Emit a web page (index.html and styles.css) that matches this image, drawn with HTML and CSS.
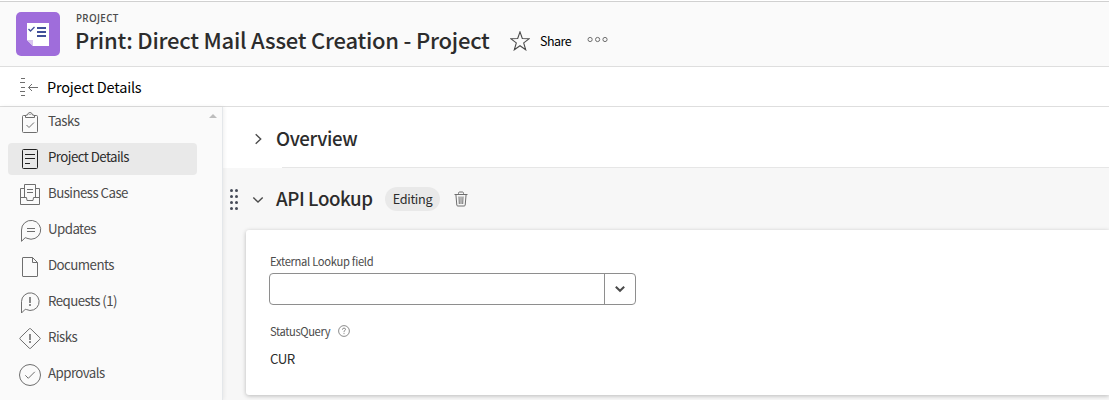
FILE: index.html
```html
<!DOCTYPE html>
<html lang="en">
<head>
<meta charset="utf-8">
<title>Project Details</title>
<link rel="stylesheet" href="styles.css">
</head>
<body>
<div class="app">
  <header class="header">
    <svg class="logo" width="44" height="44" viewBox="0 0 44 44"><rect width="44" height="44" rx="5" fill="#9f6ddb"/><path d="M11 11h22v23H17l-6-6z" fill="#fff"/><path d="M11 28h6v6z" fill="#d9c5ef"/><path d="M21 16h9M21 20h9M21 24h9" stroke="#404f9a" stroke-width="2"/><path d="M12.500 17l2 2 4-4" fill="none" stroke="#404f9a" stroke-width="1.300"/></svg>
    <div class="heading">
      <div class="kind">PROJECT</div>
      <h1 class="title">Print: Direct Mail Asset Creation - Project</h1>
    </div>
    <div class="actions">
      <svg class="star" width="20" height="20" viewBox="0 0 20 20"><path d="M10 .9l2.300 6.600 7 .2-5.600 4.200 2 6.900L10 14.700l-5.700 4.100 2-6.900L.7 7.700l7-.2z"/></svg>
      <span class="share">Share</span>
      <svg class="more" width="21" height="7" viewBox="0 0 21 7"><circle cx="3.100" cy="3.500" r="2.100"/><circle cx="10.600" cy="3.500" r="2.100"/><circle cx="18" cy="3.500" r="2.100"/></svg>
    </div>
  </header>
  <div class="subheader">
    <svg class="collapse" width="20" height="20" viewBox="0 0 20 20"><path d="M2 1.500h4M1 5.500h5M2 10.500h4M1 14.500h5M2 18.500h4M9.500 10.500H19M13 7L9.500 10.500l3.500 3.500"/></svg>
    <span class="crumb">Project Details</span>
  </div>
  <div class="body">
    <nav class="sidebar">
      <a class="item"><svg width="24" height="24" viewBox="0 0 24 24"><path d="M8 4.500H5.500a1 1 0 0 0-1 1v15a1 1 0 0 0 1 1h13a1 1 0 0 0 1-1v-15a1 1 0 0 0-1-1H16M7.500 6.500V5q0-1 1.500-1h.5q.4-2.500 2.500-2.500T14.500 4h.5q1.500 0 1.500 1v1.500zM8.500 14l2.500 2.500 5-5M11.500 3.500h1"/></svg><span class="lb">Tasks</span></a>
      <a class="item active"><svg width="24" height="24" viewBox="0 0 24 24"><rect x="4.500" y="2.500" width="15" height="19" rx="1"/><path d="M7 7.500h10M7 11.500h10M7 16.500h5"/></svg><span class="lb">Project Details</span></a>
      <a class="item"><svg width="24" height="24" viewBox="0 0 24 24"><path d="M6.500 14.500v-13h11v13M6.500 5.500h-4v16h19v-16h-4M2.500 14.500h6l.5 3h6l.5-3h6M9 6.500h6M9 9.500h6"/></svg><span class="lb">Business Case</span></a>
      <a class="item"><svg width="24" height="24" viewBox="0 0 24 24"><path d="M3.500 22.300V11a9.600 9.400 0 1 1 5.500 8.300q-1-.6-1.800-.6zM9 9.500h8M9 12.500h8"/></svg><span class="lb">Updates</span></a>
      <a class="item"><svg width="24" height="24" viewBox="0 0 24 24"><path d="M5 2.500h9.500l5 5v13.500q0 .5-.5.500H5q-.5 0-.5-.5V3q0-.5.5-.5zM14.500 2.500v5h5"/></svg><span class="lb">Documents</span></a>
      <a class="item"><svg width="24" height="24" viewBox="0 0 24 24"><path d="M3.500 22V10.600a8.800 8.800 0 1 1 4.800 7.900l-1-.3z"/><path class="mark" d="M12 6v6M12 13v2"/></svg><span class="lb">Requests (1)</span></a>
      <a class="item"><svg width="24" height="24" viewBox="0 0 24 24"><path d="M11.300 1.800q.7-.7 1.400 0l9.200 9q.7.7 0 1.400l-9.200 9q-.7.7-1.400 0l-9.200-9q-.7-.7 0-1.400z"/><path class="mark" d="M12 7v6M12 14v2"/></svg><span class="lb">Risks</span></a>
      <a class="item"><svg width="24" height="24" viewBox="0 0 24 24"><circle cx="12" cy="12" r="10.500"/><path d="M7.300 12.300l3 3 6.500-6.500"/></svg><span class="lb">Approvals</span></a>
      <span class="scroll-up"></span>
    </nav>
    <main class="main">
      <section class="overview">
        <svg class="chev" width="14" height="14" viewBox="0 0 14 14"><path d="M4.700 2.300L9.700 7l-5 4.700"/></svg>
        <h2 class="h2">Overview</h2>
      </section>
      <section class="lookup">
        <div class="lookup-head">
          <svg class="grip" width="10" height="22" viewBox="0 0 10 22"><circle cx="2.500" cy="2.500" r="1.500"/><circle cx="7.500" cy="2.500" r="1.500"/><circle cx="2.500" cy="8.500" r="1.500"/><circle cx="7.500" cy="8.500" r="1.500"/><circle cx="2.500" cy="14.500" r="1.500"/><circle cx="7.500" cy="14.500" r="1.500"/><circle cx="2.500" cy="20.500" r="1.500"/><circle cx="7.500" cy="20.500" r="1.500"/></svg>
          <svg class="chev" width="14" height="14" viewBox="0 0 14 14"><path d="M2.300 5.500l4.700 4.500 4.700-4.500"/></svg>
          <h2 class="h2 api">API Lookup</h2>
          <span class="badge">Editing</span>
          <svg class="trash" width="14" height="16" viewBox="0 0 14 16"><path d="M.5 3.500h13M4.500 3.500v-1q0-1.500 1-1.500h3q1 0 1 1.500v1M1.900 3.500l.9 10.500q.1 1 1 1h6.400q.9 0 1-1l.9-10.500M5 5.500l.3 7.500M7 5.500v7.500M9 5.500L8.700 13"/></svg>
        </div>
        <div class="card">
          <div class="label"><span>External Lookup field</span></div>
          <div class="select"><div class="value"></div><div class="drop"><svg width="12" height="8" viewBox="0 0 12 8"><path d="M1.800 1.800L6 5.800l4.200-4"/></svg></div></div>
          <div class="label status"><span>StatusQuery</span><svg width="12" height="12" viewBox="0 0 12 12"><circle cx="6" cy="6" r="5.400"/><path d="M4.400 4.700Q4.500 3.100 6 3.100t1.500 1.300Q7.500 5.300 6 6.300v.9M6 8.100v1"/></svg></div>
          <div class="cur">CUR</div>
        </div>
      </section>
    </main>
  </div>
</div>
</body>
</html>
```
FILE: styles.css
```css
* { box-sizing: border-box; }
body { margin: 0; background: #fff; font-family: "Noto Sans CJK SC", "Noto Sans", sans-serif; color: #2c2c2c; overflow: hidden; }
svg { display: block; flex: none; fill: none; stroke: #6e6e6e; }
.logo { stroke: none; }
.app { height: 400px; padding-top: 1px; display: flex; flex-direction: column; }
.header { height: 66px; flex: none; display: flex; padding: 10px 16px 0; background: #fafafa; border-top: 1px solid #d0d0d0; border-bottom: 1px solid #dedede; }
.heading { margin-left: 15px; white-space: nowrap; width: 435px; }
.kind { font-family: "Open Sans", sans-serif; font-size: 9.800px; line-height: 14px; font-weight: 600; letter-spacing: .35px; color: #4b4b4b; padding-left: 1px; }
.title { margin: -1px 0 0; font-size: 22px; line-height: 28px; font-weight: 500; letter-spacing: -.22px; color: #2c2c2c; }
.actions { display: flex; align-items: center; height: 58px; }
.star { stroke: #4b4b4b; stroke-width: 1.100; margin-top: -1px; }
.share { width: 32px; margin: 0 0 0 10px; font-size: 12.500px; line-height: 20px; letter-spacing: -.5px; color: #000; }
.more { margin: -4px 0 0 15px; }
.subheader { height: 40px; flex: none; display: flex; align-items: center; padding-left: 19px; border-bottom: 1px solid #dedede; background: #fff; }
.crumb { margin: 1px 0 0 8px; font-size: 14.500px; line-height: 20px; letter-spacing: -.2px; color: #000; }
.body { flex: 1; display: flex; min-height: 0; }
.sidebar { position: relative; z-index: 1; width: 223px; flex: none; display: flex; flex-direction: column; gap: 4px; background: #fafafa; border-right: 1px solid #e4e7ea; box-shadow: 1px 0 4px rgba(0,0,0,.07); }
.item { height: 32px; flex: none; width: 189px; margin-left: 8px; padding-left: 10px; display: flex; align-items: center; gap: 6px; border-radius: 4px; color: #4b4b4b; font-size: 13.300px; letter-spacing: -.56px; line-height: 20px; white-space: nowrap; }
.item .lb { margin-top: -4px; }
.mark { stroke-width: 1.600; }
.active { background: #e9e9e9; color: #2c2c2c; }
.active svg { stroke: #222; }
.scroll-up { position: absolute; right: 5px; top: 7px; border: 4px solid transparent; border-top: 0; border-bottom: 4px solid #bdbdbd; }
.main { flex: 1; display: flex; flex-direction: column; background: #f7f7f7; }
.overview { height: 61px; flex: none; display: flex; align-items: center; padding: 2px 0 0 28px; gap: 11px; background: linear-gradient(#e6e6e6, #e6e6e6) 59px 60px / 100% 1px no-repeat #fff; }
.chev { stroke: #4b4b4b; stroke-width: 1.400; }
.h2 { margin: -2px 0 0; font-size: 18.700px; line-height: 26px; font-weight: 500; letter-spacing: -.4px; color: #2c2c2c; white-space: nowrap; }
.lookup-head { height: 62px; display: flex; align-items: center; padding: 0 0 0 6px; }
.grip { fill: #464b58; stroke: none; }
.lookup-head .chev { margin-left: 12px; }
.api { margin-left: 11px; width: 109px; }
.badge { width: 55px; height: 24px; border-radius: 12px; background: #e9e9e9; display: flex; align-items: center; justify-content: center; font-size: 12.700px; letter-spacing: -.35px; line-height: 20px; }
.trash { margin-left: 14px; }
.card { margin-left: 23px; height: 165px; background: #fff; border-radius: 3px 0 0 3px; box-shadow: 0 1px 4px rgba(0,0,0,.25); padding: 22px 0 0 23px; }
.label { height: 18px; font-size: 11.200px; letter-spacing: -.3px; line-height: 18px; color: #4b4b4b; display: flex; align-items: center; gap: 8px; padding-left: 1px; }
.select { width: 367px; height: 32px; margin-top: 3px; display: flex; border: 1px solid #8e8e8e; border-radius: 4px; }
.value { flex: 1; }
.drop { width: 31px; border-left: 1px solid #8e8e8e; display: flex; align-items: center; justify-content: center; }
.drop svg { stroke: #4b4b4b; stroke-width: 2; }
.status { margin-top: 17px; letter-spacing: -.4px; }
.status svg { stroke-width: .8; }
.cur { margin-top: 9px; padding-left: 1px; font-size: 13.300px; letter-spacing: -.6px; line-height: 20px; }
```
